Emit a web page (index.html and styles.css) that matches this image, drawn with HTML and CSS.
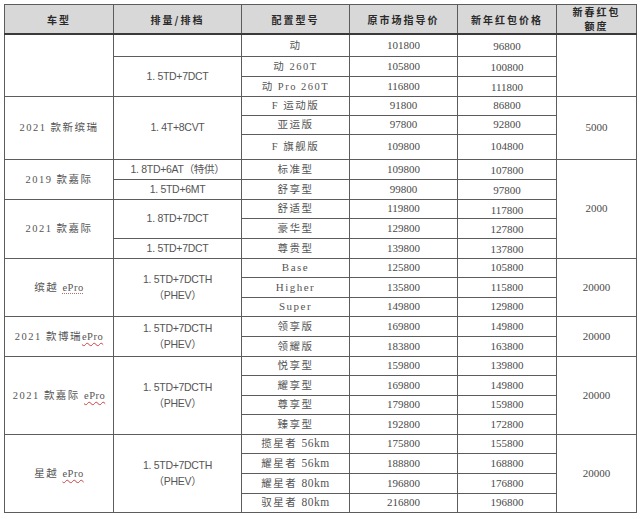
FILE: index.html
```html
<!DOCTYPE html>
<html lang="zh-CN">
<head>
<meta charset="utf-8">
<title>新春红包价格表</title>
<link rel="stylesheet" href="styles.css">
</head>
<body>
<div class="sheet">
<table class="price">
<colgroup>
<col class="c1"><col class="c2"><col class="c3"><col class="c4"><col class="c5"><col class="c6">
</colgroup>
<thead>
<tr class="r30">
<th>车型</th><th>排量/排档</th><th>配置型号</th><th>原市场指导价</th><th>新年红包价格</th><th class="two">新春红包<br>额度</th>
</tr>
</thead>
<tbody>
<tr class="r22"><td rowspan="3"></td><td></td><td class="cn">动</td><td>101800</td><td class="lo">96800</td><td rowspan="3"></td></tr>
<tr class="r20"><td rowspan="2" class="eng">1. 5TD+7DCT</td><td class="cn">动 260T</td><td>105800</td><td class="lo">100800</td></tr>
<tr class="r20"><td class="cn">动 Pro 260T</td><td>116800</td><td class="lo">111800</td></tr>

<tr class="r19"><td rowspan="3" class="cn">2021 款新缤瑞</td><td rowspan="3" class="eng">1. 4T+8CVT</td><td class="cn">F 运动版</td><td>91800</td><td>86800</td><td rowspan="3">5000</td></tr>
<tr class="r19"><td class="cn">亚运版</td><td>97800</td><td>92800</td></tr>
<tr class="r26"><td class="cn">F 旗舰版</td><td>109800</td><td>104800</td></tr>

<tr class="r20"><td rowspan="2" class="cn">2019 款嘉际</td><td class="eng">1. 8TD+6AT（特供）</td><td class="cn">标准型</td><td>109800</td><td class="lo">107800</td><td rowspan="5">2000</td></tr>
<tr class="r20"><td class="eng">1. 5TD+6MT</td><td class="cn">舒享型</td><td>99800</td><td class="lo">97800</td></tr>
<tr class="r19"><td rowspan="3" class="cn">2021 款嘉际</td><td rowspan="2" class="eng">1. 8TD+7DCT</td><td class="cn">舒适型</td><td>119800</td><td class="lo">117800</td></tr>
<tr class="r20"><td class="cn">豪华型</td><td>129800</td><td class="lo">127800</td></tr>
<tr class="r20"><td class="eng">1. 5TD+7DCT</td><td class="cn">尊贵型</td><td>139800</td><td class="lo">137800</td></tr>

<tr class="r19"><td rowspan="3" class="cn">缤越 <span class="sp grey">ePro</span></td><td rowspan="3" class="eng two">1. 5TD+7DCTH<br>（PHEV）</td><td class="lat">Base</td><td>125800</td><td>105800</td><td rowspan="3">20000</td></tr>
<tr class="r20"><td class="lat">Higher</td><td>135800</td><td>115800</td></tr>
<tr class="r19"><td class="lat">Super</td><td>149800</td><td>129800</td></tr>

<tr class="r20"><td rowspan="2" class="cn">2021 款博瑞<span class="sp">ePro</span></td><td rowspan="2" class="eng two">1. 5TD+7DCTH<br>（PHEV）</td><td class="cn">领享版</td><td>169800</td><td>149800</td><td rowspan="2">20000</td></tr>
<tr class="r20"><td class="cn">领耀版</td><td>183800</td><td>163800</td></tr>

<tr class="r19"><td rowspan="4" class="cn">2021 款嘉际 <span class="sp">ePro</span></td><td rowspan="4" class="eng two">1. 5TD+7DCTH<br>（PHEV）</td><td class="cn">悦享型</td><td>159800</td><td>139800</td><td rowspan="4">20000</td></tr>
<tr class="r20"><td class="cn">耀享型</td><td>169800</td><td>149800</td></tr>
<tr class="r19"><td class="cn">尊享型</td><td>179800</td><td>159800</td></tr>
<tr class="r20"><td class="cn">臻享型</td><td>192800</td><td>172800</td></tr>

<tr class="r19"><td rowspan="4" class="cn">星越 <span class="sp">ePro</span></td><td rowspan="4" class="eng two">1. 5TD+7DCTH<br>（PHEV）</td><td class="cn">揽星者 <span class="num">56km</span></td><td>175800</td><td>155800</td><td rowspan="4">20000</td></tr>
<tr class="r20"><td class="cn">耀星者 <span class="num">56km</span></td><td>188800</td><td>168800</td></tr>
<tr class="r20"><td class="cn">耀星者 <span class="num">80km</span></td><td>196800</td><td>176800</td></tr>
<tr class="r19"><td class="cn">驭星者 <span class="num">80km</span></td><td>216800</td><td>196800</td></tr>
</tbody>
</table>
</div>
</body>
</html>
```
FILE: styles.css
```css
html, body {
  margin: 0;
  padding: 0;
  background: #ffffff;
}
body {
  font-family: "Liberation Serif", "Noto Sans CJK SC", serif;
  color: #4a4a4a;
}
.sheet {
  padding: 4px 0 0 4px;
}
.price {
  border-collapse: collapse;
  table-layout: fixed;
  width: 632px;
}
.c1 { width: 109px; }
.c2 { width: 128px; }
.c3 { width: 108px; }
.c4 { width: 108px; }
.c5 { width: 99px; }
.c6 { width: 80px; }

.price th,
.price td {
  border: 1px solid #5c5c5c;
  padding: 0;
  text-align: center;
  vertical-align: middle;
  font-size: 11px;
  line-height: 13px;
  white-space: nowrap;
  overflow: hidden;
}
.price th {
  background: #d8d8d8;
  color: #2a2a2a;
  font-family: "Noto Sans CJK SC", sans-serif;
  font-weight: bold;
  font-size: 10px;
  letter-spacing: 2px;
  border-bottom: 2px solid #3a3a3a;
}
.price th.two {
  line-height: 14px;
}
.price td.cn {
  font-family: "Liberation Serif", "Noto Sans CJK SC", serif;
  letter-spacing: 1.5px;
  font-size: 10.5px;
  color: #555;
}
.price td.cn .num {
  letter-spacing: 0.5px;
  font-size: 11.5px;
}
.price td.lat {
  letter-spacing: 1.5px;
  font-size: 11px;
  color: #555;
}
.price td.eng {
  font-family: "Liberation Sans", "Noto Sans CJK SC", sans-serif;
  font-size: 10.5px;
  letter-spacing: -0.3px;
  color: #555;
}
.price td.two {
  line-height: 16px;
}
.price td.lo {
  padding-top: 3px;
}
.sp {
  text-decoration: underline wavy #d04040;
  text-decoration-thickness: 1px;
  text-underline-offset: 2px;
  letter-spacing: 0.5px;
}
.sp.grey {
  text-decoration: underline dotted #b07070;
}

.r30 { height: 26px; }
.r26 { height: 25px; }
.r22 { height: 22px; }
.r20 { height: 20px; }
.r19 { height: 19px; }
```
